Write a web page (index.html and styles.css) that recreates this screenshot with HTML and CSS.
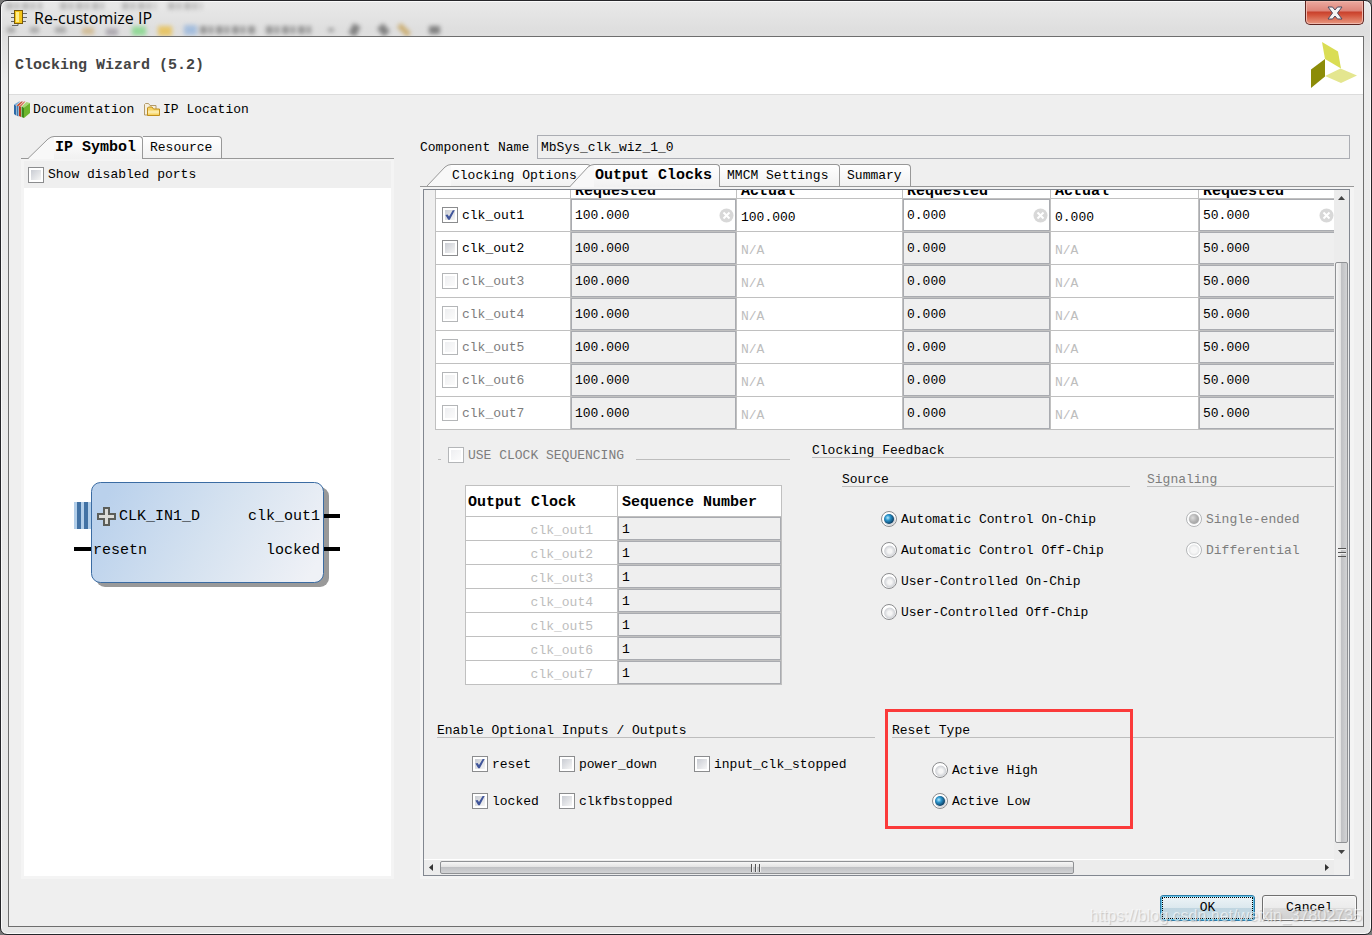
FILE: index.html
```html
<!DOCTYPE html>
<html lang="en">
<head>
<meta charset="utf-8">
<title>Re-customize IP</title>
<link rel="stylesheet" href="styles.css">
</head>
<body>
<div class="window">
  <header class="titlebar">
    <svg class="glass" width="460" height="35" viewBox="0 0 460 35" aria-hidden="true">
      <g class="glass-soft">
        <path d="M4 5h36M58 5h44M120 5h34M166 5h34" stroke="#9a9a9a" stroke-width="7" stroke-dasharray="7 2 4 3"/>
        <path d="M5 29h8M28 29h9M53 29h11" stroke="#888" stroke-width="6"/>
        <path d="M80 30h12" stroke="#c9a565" stroke-width="7"/>
        <path d="M104 31h12" stroke="#8c8590" stroke-width="7"/>
        <path d="M130 30h14" stroke="#5fd668" stroke-width="9"/>
        <path d="M156 30h14" stroke="#edb51c" stroke-width="10"/>
        <path d="M182 29h13" stroke="#7fa8dc" stroke-width="10"/>
        <path d="M198 29h56M264 29h46" stroke="#6a6a6a" stroke-width="8" stroke-dasharray="7 2 4 3"/>
        <path d="M355 24l-5 10M378 25l7 8M427 29h11" stroke="#444" stroke-width="8"/>
        <path d="M326 29h6" stroke="#777" stroke-width="4"/>
        <path d="M397 24l10 10" stroke="#c0902f" stroke-width="6"/>
      </g>
    </svg>
    <svg class="chip" width="18" height="18" viewBox="0 0 18 18" aria-hidden="true">
      <path d="M1 4.500h4M1 8.500h4M1 12.500h4M12 4.500h5M12 8.500h5M12 12.500h4M2 16.500h6v-2" fill="none" stroke="#666"/>
      <rect x="4.500" y="1.500" width="8" height="13" fill="#f5c518" stroke="#7a5a08"/>
      <rect x="6" y="3" width="3" height="10" fill="#ffed8a"/>
    </svg>
    <h1 class="window-title">Re-customize IP</h1>
    <button class="close" type="button" aria-label="Close">
      <svg width="16" height="14" viewBox="0 0 16 14" aria-hidden="true">
        <path d="M1 1h4.500L8 4l2.500-3H15l-4.500 6L15 13h-4.500L8 10l-2.500 3H1l4.500-6z" fill="#f4f4f4" stroke="#4d4a60"/>
      </svg>
    </button>
  </header>

  <main class="dialog">
    <div class="banner">
      <h2 class="banner-title">Clocking Wizard (5.2)</h2>
      <svg class="logo" width="46" height="46" viewBox="0 0 46 46" role="img" aria-label="Xilinx">
        <path d="M11 0l16 9.500 3 17L14 17z" fill="#dadd54"/>
        <path d="M0 27.500L14 17v17.500L0 46z" fill="#8c8c08"/>
        <path d="M14 34l15.500-7.500L46 33.500 30 41z" fill="#e4e68f"/>
      </svg>
    </div>

    <nav class="toolbar">
      <button class="tool" type="button">
        <svg width="16" height="17" viewBox="0 0 16 17" aria-hidden="true">
          <path d="M0 4l5-3 11 1v10l-6 5-10-4z" fill="#eef1ea"/>
          <path d="M0 3.500L2 4.500v10L0 13z" fill="#2d6aa8"/><path d="M0 3.500L5 .500h1.500L2 4.500z" fill="#7fb0da"/>
          <path d="M2.500 4.500l2 .500v10.500l-2-1z" fill="#3f7cb4"/><path d="M2.500 4.500l5-4H9L4.500 5z" fill="#c2452a"/>
          <path d="M5 5l2 .500v10.500l-2-1z" fill="#b93b22"/><path d="M5 5l5-4.500h1.500L7 5.500z" fill="#d9735c"/>
          <path d="M7.500 5.500l2.500 1v10.500l-2.500-1z" fill="#3b8a1c"/><path d="M7.500 5.500L12.500 1 16 2l-6 4.500z" fill="#a9d676"/>
          <path d="M10 6.500L16 2v10l-6 5z" fill="#6db52c"/>
        </svg>
        <span>Documentation</span>
      </button>
      <button class="tool" type="button">
        <svg width="17" height="15" viewBox="0 0 17 15" aria-hidden="true">
          <path d="M1.500 13V2.500l1-1h3l1.500 2h6V13z" fill="#f6efdc" stroke="#b39a6a"/>
          <path d="M4.500 13.500V6l1-1H9l1.500 2H16.500v6.500z" fill="#f7d465" stroke="#c08e1c"/>
          <path d="M5 10h11" stroke="#fbeaa8" stroke-width="3"/>
        </svg>
        <span>IP Location</span>
      </button>
    </nav>

    <div class="columns">
      <section class="pane">
        <div class="tabs" role="tablist">
          <button class="tab tab-first active" type="button" role="tab" aria-selected="true"><svg class="slant" width="26" height="23" viewBox="0 0 26 23" aria-hidden="true"><path class="slant-fill" d="M0 23L20 3Q23 .500 26 .500V23z"/><path class="slant-line" d="M0 22.500L20 3Q23 .500 26 .500"/></svg><span class="tab-text tab-symbol">IP Symbol</span></button>
          <button class="tab" type="button" role="tab" aria-selected="false"><span class="tab-text tab-resource">Resource</span></button>
        </div>
        <div class="symbol-panel">
          <label class="check show-ports"><input type="checkbox"><span>Show disabled ports</span></label>
          <div class="symbol-view">
            <svg width="266" height="105" viewBox="0 0 266 105" role="img" aria-label="IP symbol">
              <defs>
                <linearGradient id="block" gradientUnits="userSpaceOnUse" x1="40" y1="0" x2="230" y2="105">
                  <stop offset="0" stop-color="#bad1ec"/><stop offset=".5" stop-color="#d5e2f0"/><stop offset="1" stop-color="#eff1f6"/>
                </linearGradient>
              </defs>
              <rect x="22" y="5" width="233" height="100" rx="9" fill="#999"/>
              <rect x="17.500" y=".5" width="232" height="100" rx="9" fill="url(#block)" stroke="#3b6ca3"/>
              <path d="M0 20h17v27H0z" fill="#b2cee9"/>
              <path d="M3 20h4v27H3zM10 20h4v27h-4z" fill="#4272a4"/>
              <path d="M0 65h17v4H0zM250 32h16v4h-16zM250 65h16v4h-16z" fill="#000"/>
              <path d="M30 26h5v6h6v5h-6v6h-5v-6h-6v-5h6z" fill="#dcdcd8" stroke="#5c5e5a" stroke-width="2"/>
              <text class="port" x="45" y="38">CLK_IN1_D</text>
              <text class="port" x="19" y="72">resetn</text>
              <text class="port" x="246" y="38" text-anchor="end">clk_out1</text>
              <text class="port" x="246" y="72" text-anchor="end">locked</text>
            </svg>
          </div>
        </div>
      </section>

      <section class="pane config">
        <div class="name-row">
          <label for="component">Component Name</label>
          <input id="component" class="name-input" type="text" value="MbSys_clk_wiz_1_0" readonly>
        </div>
        <div class="tabs" role="tablist">
          <button class="tab tab-first" type="button" role="tab" aria-selected="false"><svg class="slant" width="24" height="22" viewBox="0 0 24 22" aria-hidden="true"><path class="slant-fill" d="M0 22L18 3Q21 .500 24 .500V22z"/><path class="slant-line" d="M0 22L18 3Q21 .500 24 .500"/></svg><span class="tab-text tab-wide">Clocking Options</span></button>
          <button class="tab tab-over active" type="button" role="tab" aria-selected="true"><svg class="slant" width="24" height="23" viewBox="0 0 24 23" aria-hidden="true"><path class="slant-fill" d="M0 23L18 3Q21 .500 24 .500V23z"/><path class="slant-line" d="M0 22.500L18 3Q21 .500 24 .500"/></svg><span class="tab-text">Output Clocks</span></button>
          <button class="tab" type="button" role="tab" aria-selected="false"><span class="tab-text tab-mmcm">MMCM Settings</span></button>
          <button class="tab" type="button" role="tab" aria-selected="false"><span class="tab-text tab-summary">Summary</span></button>
        </div>

        <div class="scroll-frame">
          <div class="scroll-area">
            <div class="viewport">
              <table class="clocks">
                <colgroup><col class="c-name"><col class="c-freq"><col class="c-freq"><col class="c-phase"><col class="c-phase"><col></colgroup>
                <thead>
                  <tr><th></th><th><div class="peek">Requested</div></th><th><div class="peek">Actual</div></th><th><div class="peek">Requested</div></th><th><div class="peek">Actual</div></th><th><div class="peek">Requested</div></th></tr>
                </thead>
                <tbody id="clock-rows"></tbody>
              </table>

              <div class="row-top">
                <section class="sequencing">
                  <div class="seq-legend"><i class="rule rule-dash"></i><label class="check"><input type="checkbox" disabled><span>USE CLOCK SEQUENCING</span></label><i class="rule"></i></div>
                  <table class="sequence">
                    <thead><tr><th>Output Clock</th><th>Sequence Number</th></tr></thead>
                    <tbody id="sequence-rows"></tbody>
                  </table>
                </section>
                <section class="feedback">
                  <h3 class="group-title">Clocking Feedback</h3>
                  <div class="feedback-groups">
                    <div class="source">
                      <h4 class="group-title">Source</h4>
                      <div class="radios">
                        <label class="check"><input type="radio" name="source" checked><span>Automatic Control On-Chip</span></label>
                        <label class="check"><input type="radio" name="source"><span>Automatic Control Off-Chip</span></label>
                        <label class="check"><input type="radio" name="source"><span>User-Controlled On-Chip</span></label>
                        <label class="check"><input type="radio" name="source"><span>User-Controlled Off-Chip</span></label>
                      </div>
                    </div>
                    <div class="signaling">
                      <h4 class="group-title muted">Signaling</h4>
                      <div class="radios">
                        <label class="check"><input type="radio" name="signaling" checked disabled><span>Single-ended</span></label>
                        <label class="check"><input type="radio" name="signaling" disabled><span>Differential</span></label>
                      </div>
                    </div>
                  </div>
                </section>
              </div>

              <div class="row-bottom">
                <section class="optional">
                  <h3 class="group-title">Enable Optional Inputs / Outputs</h3>
                  <div class="options">
                    <label class="check"><input type="checkbox" checked><span>reset</span></label>
                    <label class="check"><input type="checkbox"><span>power_down</span></label>
                    <label class="check"><input type="checkbox"><span>input_clk_stopped</span></label>
                    <label class="check"><input type="checkbox" checked><span>locked</span></label>
                    <label class="check"><input type="checkbox"><span>clkfbstopped</span></label>
                  </div>
                </section>
                <section class="reset">
                  <h3 class="group-title">Reset Type</h3>
                  <div class="radios">
                    <label class="check"><input type="radio" name="reset"><span>Active High</span></label>
                    <label class="check"><input type="radio" name="reset" checked><span>Active Low</span></label>
                  </div>
                  <div class="highlight"></div>
                </section>
              </div>
            </div>

            <div class="vbar">
              <svg class="arrow" width="7" height="4" viewBox="0 0 7 4" aria-hidden="true"><path d="M0 4l3.500-4L7 4z" fill="#444"/></svg>
              <div class="vthumb"><i class="grip"></i></div>
              <svg class="arrow" width="7" height="4" viewBox="0 0 7 4" aria-hidden="true"><path d="M0 0h7L3.500 4z" fill="#444"/></svg>
            </div>
            <div class="hbar">
              <svg class="arrow" width="4" height="7" viewBox="0 0 4 7" aria-hidden="true"><path d="M4 0v7L0 3.500z" fill="#333"/></svg>
              <div class="htrack"><div class="hthumb"><i class="grip"></i></div></div>
              <svg class="arrow" width="4" height="7" viewBox="0 0 4 7" aria-hidden="true"><path d="M0 0v7l4-3.500z" fill="#333"/></svg>
            </div>
          </div>
        </div>
      </section>
    </div>

    <footer class="actions">
      <button class="action primary" type="button">OK</button>
      <button class="action" type="button">Cancel</button>
    </footer>
  </main>
  <div class="watermark">https://blog.csdn.net/weixin_37802735</div>
</div>
<script src="rows.js"></script>
</body>
</html>
```
FILE: styles.css
```css
* { box-sizing: border-box; }

html { height: 100%; background: #777; }

body {
  margin: 0;
  min-height: 100%;
  display: flex;
  font: 13px/16px "Liberation Mono", monospace;
  color: #000;
}

h1, h2, h3, h4 { margin: 0; font: inherit; }
button, input { font: inherit; color: inherit; }
button { margin: 0; padding: 0; border: 0; background: none; }

/* Window frame */
.window {
  position: relative;
  flex: 1;
  display: flex;
  flex-direction: column;
  padding: 0 7px 7px;
  border: 1px solid #26262a;
  border-radius: 7px;
  background: linear-gradient(#e9e9e9, #dedede 30px, #ececec 80px, #e6e6e6);
  box-shadow: inset 0 0 0 1px #fafafa;
}

.titlebar {
  position: relative;
  display: flex;
  height: 35px;
}

.glass { position: absolute; left: -6px; top: 0; }
.glass-soft { filter: blur(2px); opacity: 0.6; }
.chip { position: relative; margin: 8px 6px 0 2px; }

.window-title {
  position: relative;
  font: 16px/20px "Open Sans", "Noto Sans", sans-serif;
  margin-top: 7px;
}

.close {
  display: flex;
  align-items: center;
  justify-content: center;
  width: 59px;
  height: 24px;
  margin-left: auto;
  border: 1px solid #5e2420;
  border-top: 0;
  border-radius: 0 0 5px 5px;
  background: linear-gradient(#ecaaa0, #dd8478 10px, #c8402c 11px, #d2523a 60%, #e89880);
  box-shadow: inset 0 0 0 1px #f0b8ac;
}

/* Dialog */
.dialog {
  flex: 1;
  display: flex;
  flex-direction: column;
  border: 1px solid #6e6e6e;
  background: #efefef;
}

.banner {
  display: flex;
  align-items: center;
  justify-content: space-between;
  height: 58px;
  padding: 0 6px;
  border-bottom: 1px solid #dcdcdc;
  background: #fff;
}

.banner-title { font-size: 15px; font-weight: bold; color: #444; }
.logo { margin-bottom: 2px; }

.toolbar {
  display: flex;
  align-items: center;
  gap: 5px;
  height: 28px;
  padding-left: 5px;
}

.tool { display: flex; align-items: center; gap: 3px; }
.tool:first-child { width: 124px; }
.tool span, .name-row label { padding-top: 1px; }

.columns {
  flex: 1;
  display: grid;
  grid-template-columns: 373px minmax(0, 1fr);
  gap: 26px;
  padding: 12px 9px 0 12px;
}

.pane { display: flex; flex-direction: column; min-width: 0; padding-top: 1px; }
.config { padding-top: 0; }

/* Tabs */
.tabs {
  display: flex;
  height: 23px;
  box-shadow: inset 0 -1px #989898;
}

.tab { display: flex; height: 22px; white-space: nowrap; }
.tab.active { height: 23px; font-size: 15px; font-weight: bold; }
.tab-first { margin-left: 7px; }
.tab-over { margin-left: -21px; position: relative; }

.tab-text {
  height: 100%;
  padding: 3px 7px 0;
  border: solid #989898;
  border-width: 1px 1px 0 0;
  border-radius: 0 4px 0 0;
  background: linear-gradient(#fff, #f1f1f1);
  text-align: left;
}

.slant { flex: none; }
.slant + .tab-text { padding-left: 1px; }
.tab-symbol { width: 89px; padding-right: 0; }
.tab-resource { width: 79px; }
.tab-wide { width: 140px; }
.tab-mmcm { width: 120px; }
.tab-summary { width: 71px; }
.slant-fill { fill: #f8f8f8; }
.slant-line { fill: none; stroke: #989898; }

/* IP symbol */
.symbol-panel {
  flex: 1;
  display: flex;
  flex-direction: column;
  border: 3px solid #f4f4f4;
  border-top-width: 2px;
}

.show-ports { height: 27px; padding-left: 4px; }

.symbol-view {
  flex: 1;
  display: flex;
  align-items: center;
  justify-content: center;
  padding: 4px 2px 0 0;
  background: #fff;
}

.port { font-size: 15px; }

/* Check boxes and radio buttons */
.check { display: flex; align-items: center; gap: 4px; white-space: nowrap; }
.check span { padding-top: 1px; }
.radios .check span, .options .check span { padding-top: 2px; }
.check:has(:disabled), .muted { color: #7d7d7d; }

input[type="checkbox"], input[type="radio"] {
  appearance: none;
  flex: none;
  display: grid;
  place-items: center;
  width: 16px;
  height: 16px;
  margin: 0;
  border: 1px solid #8b8c8e;
  background: linear-gradient(135deg, #c9ccd3, #f6f6f6) content-box, #fff;
  padding: 2px;
}

input[type="checkbox"]:checked::before {
  content: "";
  width: 10px;
  height: 10px;
  background: #41569b;
  clip-path: polygon(4% 50%, 26% 45%, 40% 66%, 78% 2%, 98% 2%, 48% 98%, 32% 98%);
}

input[type="checkbox"]:disabled {
  border-color: #b4b6b8;
  background: linear-gradient(135deg, #eeeff1, #fbfbfb) content-box, #fff;
}

input[type="radio"] {
  border-radius: 50%;
  padding: 0;
  background: radial-gradient(circle at 55% 58%, #f6f6f6 0 2px, #d3d5d9 5px, #fff 6px);
}

input[type="radio"]:checked::before {
  content: "";
  width: 10px;
  height: 10px;
  border-radius: 50%;
  background: radial-gradient(circle at 38% 38%, #b6ecff, #2b94cb 30%, #0c3e63 72%, #152f45);
}

input[type="radio"]:disabled {
  border-color: #b4b6b8;
  background: radial-gradient(circle at 50% 50%, #f6f6f6 0 3px, #e6e7e8 5px, #fff 6px);
}

input[type="radio"]:disabled::before { background: radial-gradient(circle at 38% 38%, #ddd, #b0b0b0 50%, #999); }

/* Component name */
.name-row { display: flex; align-items: center; height: 24px; margin: 0 4px 5px 0; }
.name-row label { width: 117px; }

.name-input {
  flex: 1;
  min-width: 0;
  height: 24px;
  padding: 0 3px;
  border: 1px solid #abadb3;
  background: #efefef;
}

/* Scrolled page */
.scroll-frame {
  flex: 1;
  display: flex;
  border: 3px solid #f4f4f4;
  border-width: 2px 4px 3px 3px;
}

.scroll-area {
  flex: 1;
  min-width: 0;
  display: grid;
  grid-template: minmax(0, 1fr) 16px / minmax(0, 1fr) 15px;
  border: 1px solid #828790;
}

.viewport { overflow: hidden; }

table { border-spacing: 0; table-layout: fixed; background: #fff; }
th, td { padding: 0; border: solid #c0c0c0; border-width: 0 1px 1px 0; text-align: left; }
th { font-size: 15px; }

td input[type="text"] {
  display: block;
  width: 100%;
  height: 32px;
  padding: 0 3px;
  border: 1px solid #a9abb0;
  border-radius: 0;
  background: #efefef;
}

.clocks { width: calc(100% - 11px); margin-left: 11px; border-left: 1px solid #c0c0c0; }
.clocks th:last-child, .clocks td:last-child, .clocks td:last-child input { border-right: 0; }
.c-name { width: 135px; }
.c-freq { width: 166px; }
.c-phase { width: 148px; }
.clocks td { height: 33px; }
.clocks .check { padding-left: 6px; }
.clocks .actual { padding: 5px 0 0 4px; }
.na { color: #bdbdbd; }

/* Header cell scrolled almost out of view */
.peek { display: flex; align-items: flex-end; height: 8px; padding-left: 4px; line-height: 12px; overflow: hidden; }

.editable { position: relative; }
td .editable input[type="text"] { background: #fff; }
.clear { position: absolute; right: 2px; top: 9px; width: 15px; height: 15px; }
.clear svg { display: block; }
.clocks td:last-child .clear { right: 0; }

/* Groups */
.group-title { height: 15px; line-height: 15px; border-bottom: 1px solid #bdbdbd; white-space: nowrap; }
.rule { flex: 1; height: 1px; margin-top: 8px; background: #bdbdbd; }
.rule-dash { flex: 0 0 3px; }

.row-top { display: flex; gap: 22px; padding-left: 14px; }
.sequencing { width: 352px; padding-top: 17px; }
.seq-legend { display: flex; align-items: center; gap: 7px; height: 16px; }
.seq-legend .check { width: 181px; }

.sequence { width: 317px; margin: 22px 0 0 27px; border: solid #c0c0c0; border-width: 1px 0 0 1px; }
.sequence th { height: 31px; padding: 4px 0 0 4px; }
.sequence th:first-child { width: 152px; padding-left: 2px; }
.sequence td { height: 24px; }
.sequence td input[type="text"] { height: 23px; padding-top: 1px; }
.sequence td:first-child { padding: 4px 24px 0 0; text-align: right; color: #bdbdbd; }

.feedback { flex: 1; min-width: 0; padding-top: 13px; }
.feedback-groups { display: flex; gap: 17px; padding: 14px 0 0 30px; }
.source { width: 288px; }
.signaling { flex: 1; min-width: 0; }
.radios { padding: 16px 0 0 39px; }
.radios .check { height: 31px; }

.row-bottom { display: flex; gap: 17px; padding: 38px 0 0 13px; }
.optional { width: 438px; }

.options {
  display: grid;
  grid-template-columns: 87px 135px 1fr;
  grid-auto-rows: 37px;
  padding: 7px 0 0 35px;
}

.reset { position: relative; flex: 1; min-width: 0; }
.reset .radios { padding-left: 40px; }

.highlight {
  position: absolute;
  left: -7px;
  top: -14px;
  width: 248px;
  height: 120px;
  border: 3px solid #fb3a3a;
  pointer-events: none;
}

/* Scroll bars */
.vbar, .hbar { display: flex; align-items: center; background: #ececec; }
.vbar { flex-direction: column; padding: 6px 0 5px; }
.hbar { padding: 0 5px; border-top: 1px solid #fff; }
.arrow { flex: none; }

.vthumb {
  flex: 1;
  display: grid;
  place-items: center;
  width: 13px;
  margin: 62px 0 7px;
  border: 1px solid #8f9194;
  border-radius: 2px;
  background: linear-gradient(90deg, #f6f6f6, #e3e3e3 45%, #c0c1c4 50%, #d2d3d5);
}

.htrack { flex: 1; margin: 0 5px 0 7px; }

.hthumb {
  display: grid;
  place-items: center;
  width: 72%;
  height: 13px;
  border: 1px solid #8f9194;
  border-radius: 2px;
  background: linear-gradient(#f6f6f6, #e3e3e3 45%, #c0c1c4 50%, #d2d3d5);
}

.vthumb .grip { width: 8px; height: 9px; background: repeating-linear-gradient(#555 0 1px, #eee 1px 2px, transparent 2px 4px); }
.hthumb .grip { width: 11px; height: 8px; background: repeating-linear-gradient(90deg, #555 0 1px, #eee 1px 2px, transparent 2px 4px); }

/* Footer */
.actions { display: flex; justify-content: flex-end; gap: 7px; padding: 16px 6px 5px; }

.action {
  width: 95px;
  height: 26px;
  border: 1px solid #707070;
  border-radius: 3px;
  background: linear-gradient(#f3f3f3, #ebebeb 50%, #dcdcdc 50%, #cfcfcf);
  box-shadow: inset 0 0 0 1px #fafafa;
}

.primary {
  border-color: #2f7ca8;
  background: linear-gradient(#eef4f7, #dbe8ee 50%, #bfd5e0 50%, #c9dee8);
  box-shadow: inset 0 0 0 1px #64c4e8;
  outline: 1px dotted #000;
  outline-offset: -3px;
}

.watermark {
  position: absolute;
  right: 9px;
  bottom: 8px;
  font: 16px/20px "Liberation Sans", sans-serif;
  color: rgba(255, 255, 255, 0.6);
  text-shadow: 1px 1px 1px rgba(120, 120, 120, 0.35);
  pointer-events: none;
}
```
FILE: rows.js
```js
const clear = `<span class="clear"><svg width="15" height="15" viewBox="0 0 15 15" aria-hidden="true"><circle cx="7.500" cy="7.500" r="7" fill="#d8d8d8"/><path d="M4.500 4.500l6 6M10.500 4.500l-6 6" stroke="#fff" stroke-width="2"/></svg></span>`;

function field(value, label, enabled) {
  const input = `<input type="text" value="${value}" aria-label="${label}"${enabled ? "" : " readonly"}>`;
  return enabled ? `<div class="editable">${input}${clear}</div>` : input;
}

let clocks = "";
let sequence = "";
for (let i = 1; i <= 7; i++) {
  const name = `clk_out${i}`;
  const on = i === 1;
  const actual = value => `<td class="actual${on ? "" : " na"}">${on ? value : "N/A"}</td>`;
  clocks += `<tr><td><label class="check"><input type="checkbox"${on ? " checked" : ""}${i > 2 ? " disabled" : ""}><span>${name}</span></label></td>
    <td>${field("100.000", name + " frequency", on)}</td>${actual("100.000")}
    <td>${field("0.000", name + " phase", on)}</td>${actual("0.000")}
    <td>${field("50.000", name + " duty cycle", on)}</td></tr>`;
  sequence += `<tr><td>${name}</td><td><input type="text" value="1" aria-label="${name} sequence number" readonly></td></tr>`;
}
document.getElementById("clock-rows").innerHTML = clocks;
document.getElementById("sequence-rows").innerHTML = sequence;
```
